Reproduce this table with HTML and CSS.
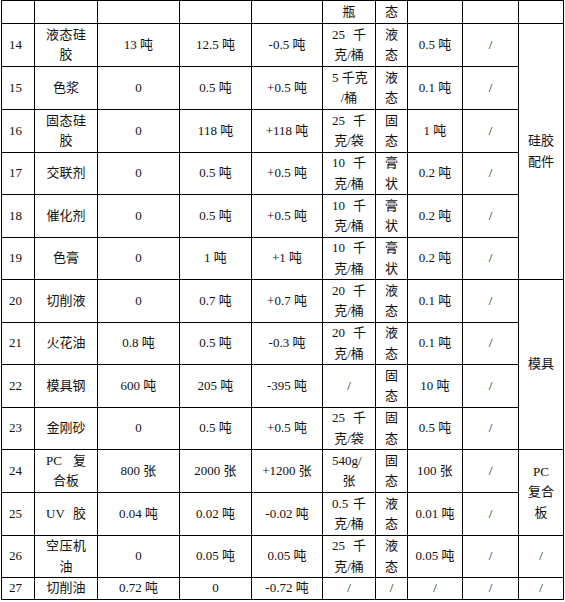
FILE: index.html
```html
<!DOCTYPE html>
<html lang="zh">
<head>
<meta charset="utf-8">
<title>原辅材料表</title>
<link rel="stylesheet" href="styles.css">
</head>
<body>
<table class="tbl">
<colgroup>
<col class="c1"><col class="c2"><col class="c3"><col class="c4"><col class="c5"><col class="c6"><col class="c7"><col class="c8"><col class="c9"><col class="c10">
</colgroup>
<tbody>
<tr class="top"><td></td><td></td><td></td><td></td><td></td><td>瓶</td><td>态</td><td></td><td></td><td></td></tr>
<tr class="r"><td>14</td><td><div class="j">液态硅</div><div>胶</div></td><td>13 吨</td><td>12.5 吨</td><td>-0.5 吨</td><td><div class="j">25 千</div><div>克/桶</div></td><td>液<br>态</td><td>0.5 吨</td><td>/</td><td rowspan="6" class="cat">硅胶<br>配件</td></tr>
<tr class="r"><td>15</td><td>色浆</td><td>0</td><td>0.5 吨</td><td>+0.5 吨</td><td><div class="j">5 千克</div><div>/桶</div></td><td>液<br>态</td><td>0.1 吨</td><td>/</td></tr>
<tr class="r"><td>16</td><td><div class="j">固态硅</div><div>胶</div></td><td>0</td><td>118 吨</td><td>+118 吨</td><td><div class="j">25 千</div><div>克/袋</div></td><td>固<br>态</td><td>1 吨</td><td>/</td></tr>
<tr class="s"><td>17</td><td>交联剂</td><td>0</td><td>0.5 吨</td><td>+0.5 吨</td><td><div class="j">10 千</div><div>克/桶</div></td><td>膏<br>状</td><td>0.2 吨</td><td>/</td></tr>
<tr class="r"><td>18</td><td>催化剂</td><td>0</td><td>0.5 吨</td><td>+0.5 吨</td><td><div class="j">10 千</div><div>克/桶</div></td><td>膏<br>状</td><td>0.2 吨</td><td>/</td></tr>
<tr class="s"><td>19</td><td>色膏</td><td>0</td><td>1 吨</td><td>+1 吨</td><td><div class="j">10 千</div><div>克/桶</div></td><td>膏<br>状</td><td>0.2 吨</td><td>/</td></tr>
<tr class="r"><td>20</td><td>切削液</td><td>0</td><td>0.7 吨</td><td>+0.7 吨</td><td><div class="j">20 千</div><div>克/桶</div></td><td>液<br>态</td><td>0.1 吨</td><td>/</td><td rowspan="4" class="cat">模具</td></tr>
<tr class="s"><td>21</td><td>火花油</td><td>0.8 吨</td><td>0.5 吨</td><td>-0.3 吨</td><td><div class="j">20 千</div><div>克/桶</div></td><td>液<br>态</td><td>0.1 吨</td><td>/</td></tr>
<tr class="r"><td>22</td><td>模具钢</td><td>600 吨</td><td>205 吨</td><td>-395 吨</td><td>/</td><td>固<br>态</td><td>10 吨</td><td>/</td></tr>
<tr class="s"><td>23</td><td>金刚砂</td><td>0</td><td>0.5 吨</td><td>+0.5 吨</td><td><div class="j">25 千</div><div>克/袋</div></td><td>固<br>态</td><td>0.5 吨</td><td>/</td></tr>
<tr class="r"><td>24</td><td><div class="j">PC 复</div><div>合板</div></td><td>800 张</td><td>2000 张</td><td>+1200 张</td><td><div class="j">540g/</div><div>张</div></td><td>固<br>态</td><td>100 张</td><td>/</td><td rowspan="2" class="cat">PC<br>复合<br>板</td></tr>
<tr class="r"><td>25</td><td><div class="j">UV 胶</div></td><td>0.04 吨</td><td>0.02 吨</td><td>-0.02 吨</td><td><div class="j">0.5 千</div><div>克/桶</div></td><td>液<br>态</td><td>0.01 吨</td><td>/</td></tr>
<tr class="s"><td>26</td><td><div class="j">空压机</div><div>油</div></td><td>0</td><td>0.05 吨</td><td>0.05 吨</td><td><div class="j">25 千</div><div>克/桶</div></td><td>液<br>态</td><td>0.05 吨</td><td>/</td><td>/</td></tr>
<tr class="last"><td>27</td><td>切削油</td><td>0.72 吨</td><td>0</td><td>-0.72 吨</td><td>/</td><td>/</td><td>/</td><td>/</td><td>/</td></tr>
</tbody>
</table>
</body>
</html>
```
FILE: styles.css
```css
body {
  margin: 0;
  background: #fff;
}

.tbl {
  border-collapse: collapse;
  table-layout: fixed;
  width: 562px;
  margin-left: 1px;
  font-family: "Liberation Serif", "Noto Sans CJK SC", serif;
  font-size: 13px;
  line-height: 20.5px;
  color: #111;
}

.c1 { width: 33px; }
.c2 { width: 63px; }
.c3 { width: 82px; }
.c4 { width: 72px; }
.c5 { width: 71px; }
.c6 { width: 53px; }
.c7 { width: 32px; }
.c8 { width: 55px; }
.c9 { width: 56px; }
.c10 { width: 45px; }

.tbl td {
  border: 1px solid #000;
  padding: 0;
  text-align: center;
  vertical-align: middle;
  white-space: nowrap;
}

.tbl td:nth-child(1) {
  text-align: left;
  padding-left: 7px;
}

.tbl td:nth-child(2) {
  padding: 0 11px;
}

.tbl td:nth-child(6) {
  padding: 0 9px;
}

.tbl .top { height: 23px; }
.tbl .top td { vertical-align: bottom; padding-bottom: 1px; }
.tbl .r { height: 43px; }
.tbl .s { height: 42px; }
.tbl .last { height: 21px; }

.j {
  text-align: justify;
  text-align-last: justify;
}

.tbl td.cat {
  text-align: center;
  padding: 0 4px;
}
```
